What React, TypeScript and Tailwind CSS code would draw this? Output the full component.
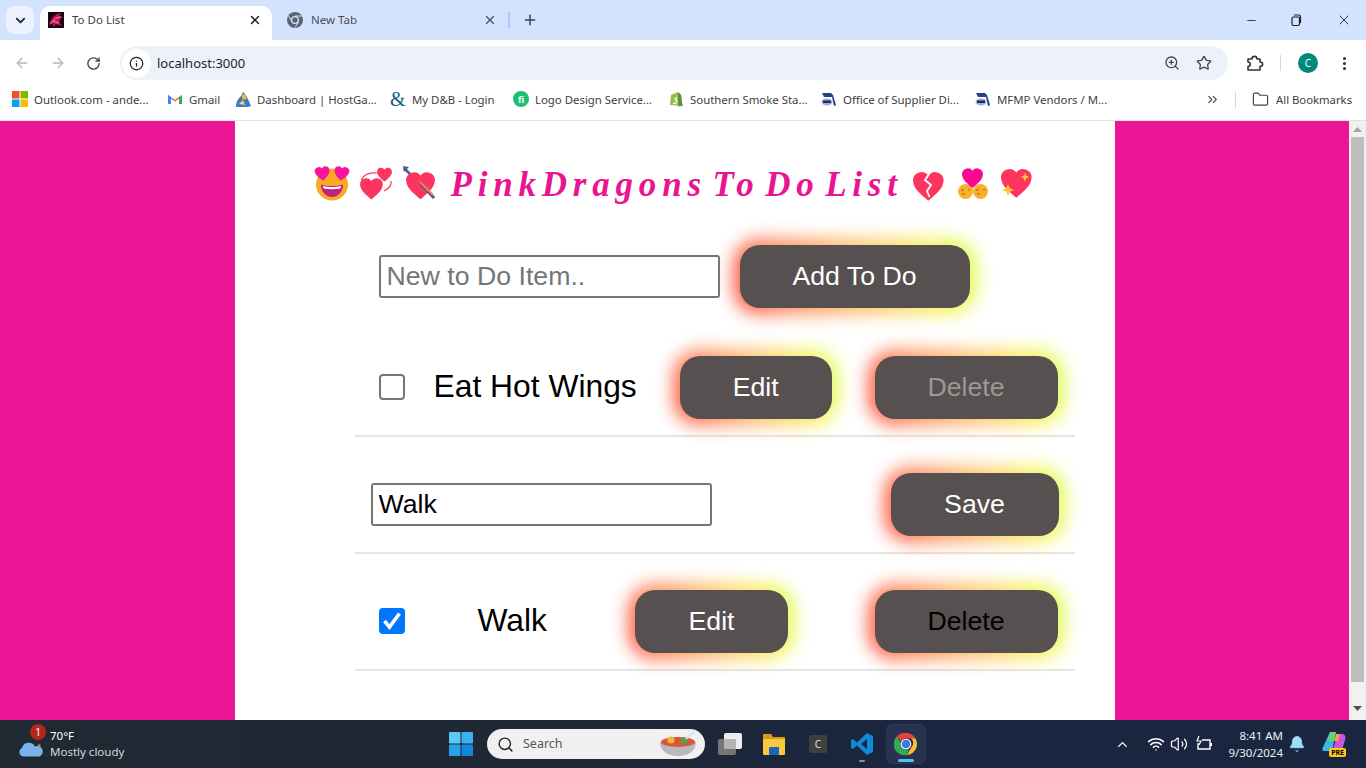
import React from "react";
import { ChevronDown, ArrowLeft, ArrowRight, RotateCw, Info, ZoomIn, Star, EllipsisVertical, ChevronsRight, Folder, Minus, X, Plus, Search, ChevronUp, Wifi, Volume2, Bell } from "lucide-react";

const HEART = "M12 22C8 18.5 1.5 14 1.5 8A5.8 5.8 0 0 1 12 4.8 5.8 5.8 0 0 1 22.500 8C22.500 14 16 18.500 12 22Z";

function ChromeLogo({ size }: { size: number }) {
  return (
    <svg width={size} height={size} viewBox="0 0 48 48">
      <path d="M24 2a22 22 0 0 1 19 11H24a11 11 0 0 0-10 6L6 8.500A22 22 0 0 1 24 2z" fill="#ea4335" />
      <path d="M43 13a22 22 0 0 1-17 33l9-16a11 11 0 0 0-1-17z" fill="#fbc02d" />
      <path d="M26 46A22 22 0 0 1 6 8.500L15 24a10 10 0 0 0 15 9.500z" fill="#34a853" />
      <circle cx="24" cy="24" r="10.500" fill="#fff" />
      <circle cx="24" cy="24" r="8.500" fill="#3b78e7" />
    </svg>
  );
}

function Tabs() {
  return (
    <div className="flex h-10 items-end bg-[#d3e3fd] shrink-0">
      <div className="ml-[6px] mb-[6px] flex h-[28px] w-[28px] items-center justify-center rounded-lg bg-[#ebf1fd]">
        <ChevronDown size={15} strokeWidth={3} className="text-[#1f2937]" />
      </div>
      <div className="ml-[6px] flex h-[34px] w-[232px] items-center rounded-t-[10px] bg-white pb-[6px] pl-2 pr-[10px]">
        <svg width="16" height="16" viewBox="0 0 16 16" className="shrink-0">
          <rect width="16" height="16" fill="#1a0710" />
          <path d="M1 13C3 6 7 2 13 1L11 4 15 5C12 6 12 9 11 10L14 14 8 12 5 15 5 11Z" fill="#c2185b" />
          <path d="M3 12C6 7 9 5 13 5M5 9L11 11" stroke="#ff7ab0" strokeWidth="1" fill="none" />
        </svg>
        <span className="ml-2 text-[11.500px] text-[#3c4043]">To Do List</span>
        <X size={14} strokeWidth={2.500} className="ml-auto text-[#1f1f1f]" />
      </div>
      <div className="ml-[15px] flex h-[34px] w-[210px] items-center pb-[6px]">
        <svg width="16" height="16" viewBox="0 0 16 16" className="shrink-0">
          <circle cx="8" cy="8" r="8" fill="#5b6470" />
          <path d="M8 4h7M5 10L1.500 3.500M11.500 10L8 15.500" stroke="#d3e3fd" strokeWidth="1" />
          <circle cx="8" cy="8" r="4" fill="#d3e3fd" />
          <circle cx="8" cy="8" r="2.700" fill="#5b6470" />
        </svg>
        <span className="ml-[8px] text-[11.500px] text-[#4a5058]">New Tab</span>
        <X size={14} strokeWidth={2.200} className="ml-auto text-[#4a5058]" />
      </div>
      <div className="ml-[11px] mb-[12px] h-[16px] w-[2px] bg-[#a8c7fa]" />
      <Plus size={16} strokeWidth={2.200} className="ml-[12px] mb-[12px] text-[#3c4043]" />
      <div className="ml-auto mb-[12px] flex items-center text-[#1f1f1f]">
        <Minus size={13} strokeWidth={1.500} />
        <svg width="14" height="14" viewBox="0 0 14 14" className="ml-[31px]" fill="none" stroke="#1f1f1f" strokeWidth="1.200">
          <rect x="3" y="4" width="7.500" height="8.500" rx="1.500" />
          <path d="M5 2h4.500a2 2 0 0 1 2 2v6" />
        </svg>
        <X size={16} strokeWidth={1.300} className="ml-[33px] mr-[14px]" />
      </div>
    </div>
  );
}

function Toolbar() {
  return (
    <div className="flex h-10 items-center bg-white pt-[6px] shrink-0">
      <ArrowLeft size={16} strokeWidth={2} className="ml-[14px] text-[#b4b7bb]" />
      <ArrowRight size={16} strokeWidth={2} className="ml-[20px] text-[#b4b7bb]" />
      <RotateCw size={15} strokeWidth={2.200} className="ml-[20px] text-[#474747]" />
      <div className="ml-[19px] flex h-[34px] w-[1108px] items-center rounded-full bg-[#edf2fa]">
        <div className="ml-[2px] flex h-[29px] w-[29px] items-center justify-center rounded-full bg-white">
          <Info size={15} strokeWidth={2} className="text-[#1f1f1f]" />
        </div>
        <span className="ml-[6px] mt-[1px] text-[13px] text-[#1f1f1f]">localhost:3000</span>
        <ZoomIn size={16} strokeWidth={2} className="ml-auto text-[#474747]" />
        <Star size={16} strokeWidth={2} className="ml-[16px] mr-[16px] text-[#474747]" />
      </div>
      <svg width="18" height="18" viewBox="0 0 18 18" className="ml-[18px]" fill="none" stroke="#333" strokeWidth="1.600" strokeLinejoin="round">
        <path d="M2 5H6C6 1.500 11 1.500 11 5H14V8C17.500 8 17.500 12.500 14 12.500V16H2V12.500C5 12.500 5 8 2 8Z" />
      </svg>
      <div className="ml-[16px] h-[16px] w-px bg-[#c7d7f5]" />
      <div className="ml-[17px] flex h-[20px] w-[20px] items-center justify-center rounded-full bg-[#00897b] text-[10px] text-white">C</div>
      <EllipsisVertical size={17} strokeWidth={2.400} className="ml-[18px] text-[#333]" />
    </div>
  );
}

const DmsIcon = () => (
  <svg width="17" height="16" viewBox="0 0 17 16">
    <path d="M1 2H10L12 4 15 14 13 15 11 6H3Z" fill="#28407e" />
    <ellipse cx="6" cy="11" rx="5.500" ry="3.500" fill="#9db2d8" />
    <rect x="2" y="9.500" width="8" height="2.500" fill="#1d2f66" />
  </svg>
);

const bookmarks: { w: number; label: string; icon: React.ReactNode }[] = [
  {
    w: 155,
    label: "Outlook.com - ande...",
    icon: (
      <svg width="16" height="16" viewBox="0 0 16 16">
        <rect width="7.500" height="7.500" fill="#f25022" />
        <rect x="8.500" width="7.500" height="7.500" fill="#7fba00" />
        <rect y="8.500" width="7.500" height="7.500" fill="#00a4ef" />
        <rect x="8.500" y="8.500" width="7.500" height="7.500" fill="#ffb900" />
      </svg>
    ),
  },
  {
    w: 68,
    label: "Gmail",
    icon: (
      <svg width="16" height="16" viewBox="0 0 16 16">
        <path d="M1 13V4l7 5 7-5v9h-3V7.500L8 10.500 4 7.500V13z" fill="#ea4335" />
        <path d="M1 4v9h3V6z" fill="#4285f4" />
        <path d="M15 4v9h-3V6z" fill="#34a853" />
        <path d="M12 6l3-2.500V5z" fill="#fbbc04" />
      </svg>
    ),
  },
  {
    w: 155,
    label: "Dashboard | HostGa...",
    icon: (
      <svg width="17" height="17" viewBox="0 0 17 17">
        <path d="M1 16C1 10 4 7 6 5L8 1 10 3 13 8 16 15 13 16Z" fill="#3f78c4" />
        <path d="M6 4L10 3 12 8 8 9Z" fill="#f5b52e" />
        <path d="M4 13L8 9 10 14Z" fill="#f0d27a" />
      </svg>
    ),
  },
  {
    w: 123,
    label: "My D&B - Login",
    icon: <span className="block w-4 font-['Liberation_Serif',serif] text-[20px] leading-4 text-[#14617f]">&amp;</span>,
  },
  {
    w: 155,
    label: "Logo Design Service...",
    icon: (
      <span className="flex h-4 w-4 items-center justify-center rounded-full bg-[#1dbf73] text-[9px] font-bold leading-none text-white">fi</span>
    ),
  },
  {
    w: 153,
    label: "Southern Smoke Sta...",
    icon: (
      <svg width="16" height="16" viewBox="0 0 16 16">
        <path d="M3 4L10 1 13 4 14.500 15 2 14Z" fill="#95bf47" />
        <path d="M10 1l3 3 1.500 11-4 .5z" fill="#5e8e3e" />
        <path d="M9 6C6 6 6 9 8 10S7 12 5.500 11.500L5 13C9 14 11 10 8.500 8.500 7.500 8 8 7 9.500 7.500Z" fill="#fff" />
      </svg>
    ),
  },
  { w: 154, label: "Office of Supplier Di...", icon: <DmsIcon /> },
  { w: 227, label: "MFMP Vendors / M...", icon: <DmsIcon /> },
];

function Bookmarks() {
  return (
    <div className="flex h-[41px] items-center border-b border-[#e1e1e1] bg-white pb-[1px] shrink-0">
      <div className="flex pl-[12px]">
        {bookmarks.map((b) => (
          <div key={b.label} className="flex items-center" style={{ width: b.w }}>
            <span className="flex w-[22px] shrink-0">{b.icon}</span>
            <span className="mt-[1px] whitespace-nowrap text-[11.400px] text-[#3c4043]">{b.label}</span>
          </div>
        ))}
      </div>
      <ChevronsRight size={15} strokeWidth={1.800} className="ml-[3px] text-[#474747]" />
      <div className="ml-[15px] h-[16px] w-px bg-[#c7d7f5]" />
      <Folder size={17} strokeWidth={1.700} className="ml-[16px] text-[#474747]" />
      <span className="ml-[7px] mt-[1px] whitespace-nowrap text-[11.300px] text-[#3c4043]">All Bookmarks</span>
    </div>
  );
}

function GlowButton({ w, label, color = "text-white", className = "" }: { w: number; label: string; color?: string; className?: string }) {
  return (
    <div className={`relative h-[63px] shrink-0 ${className}`} style={{ width: w }}>
      <span className="absolute -inset-[6px] rounded-[26px] bg-[linear-gradient(78deg,#ff1800_0%,#ff6a3a_18%,#ffb050_50%,#f8f040_82%,#c8ff20_100%)] opacity-85 blur-[9px]" />
      <button className={`relative h-full w-full rounded-[20px] bg-[#575050] text-[26.700px] ${color}`}>{label}</button>
    </div>
  );
}

function Heart({ x, y, s, fill = "#fd3460", rotate = 0 }: { x: number; y: number; s: number; fill?: string; rotate?: number }) {
  return <path d={HEART} fill={fill} transform={`translate(${x} ${y}) scale(${s / 24}) rotate(${rotate} 12 12)`} />;
}

const Emoji = ({ children, w }: { children: React.ReactNode; w: number }) => (
  <svg width={w} height="36" viewBox={`0 0 ${w} 36`} className="shrink-0 overflow-visible">
    {children}
  </svg>
);

const Sparkle = ({ cx, cy, r }: { cx: number; cy: number; r: number }) => (
  <path
    d={`M${cx} ${cy - r}L${cx + r * 0.3} ${cy - r * 0.3}L${cx + r} ${cy}L${cx + r * 0.3} ${cy + r * 0.3}L${cx} ${cy + r}L${cx - r * 0.3} ${cy + r * 0.3}L${cx - r} ${cy}L${cx - r * 0.3} ${cy - r * 0.3}Z`}
    fill="#fcc92e"
  />
);

function Title() {
  return (
    <div className="flex h-[36px] items-center pl-[80px]">
      <Emoji w={35}>
        <circle cx="17" cy="18.500" r="16" fill="#fba826" />
        <path d="M6 18.500C12 20.500 22 20.500 28 18.500 28 26 23 31 17 31S6 26 6 18.500Z" fill="#c0227e" />
        <path d="M8 20C13 21.300 21 21.300 26 20L25.500 22.500C20 23.500 14 23.500 8.500 22.500Z" fill="#fff" />
        <Heart x={-1} y={-1} s={17} fill="#f8139a" rotate={-8} />
        <Heart x={18} y={-1} s={17} fill="#f8139a" rotate={8} />
      </Emoji>
      <span className="w-[8px]" />
      <Emoji w={36}>
        <path d="M3 14C6 8 11 6 19 7M33 15C34 20 30 23 26 25" stroke="#fd3460" strokeWidth="1.200" fill="none" />
        <Heart x={0.4} y={9.700} s={26} />
        <Heart x={18} y={0} s={17} />
      </Emoji>
      <span className="w-[9px]" />
      <Emoji w={36}>
        <path d="M1 2L10 11" stroke="#5b5298" strokeWidth="2.500" />
        <path d="M0 0L6 1 1 6Z" fill="#5b5298" />
        <Heart x={1} y={3} s={33} />
        <path d="M17 17L31 32" stroke="#5b5298" strokeWidth="3" />
        <path d="M17 16L30 29" stroke="#f4893b" strokeWidth="2" />
      </Emoji>
      <span className="ml-[12px] whitespace-nowrap font-['Liberation_Serif',serif] text-[35px] font-bold italic leading-none tracking-[5.800px] text-[#e91590] [word-spacing:-9px]">
        PinkDragons To Do List
      </span>
      <span className="w-[9px]" />
      <Emoji w={34}>
        <Heart x={-1.200} y={2.600} s={35} />
        <path d="M18 6.500L13 14 19 19 15 25 17.500 31" stroke="#fff" strokeWidth="1.800" fill="none" />
      </Emoji>
      <span className="w-[11px]" />
      <Emoji w={33}>
        <circle cx="8.500" cy="25.500" r="7.500" fill="#fbb02b" />
        <circle cx="23.500" cy="25.500" r="7.500" fill="#fbb02b" />
        <path d="M4 24h3M19 24h3M5 28h3M20 28h3M11 24h2M26 24h2" stroke="#c57a10" strokeWidth="1.300" />
        <Heart x={3.500} y={0} s={24} fill="#f8098f" />
      </Emoji>
      <span className="w-[10px]" />
      <Emoji w={34}>
        <Heart x={-1.200} y={-0.400} s={35} />
        <Sparkle cx={25} cy={11} r={4.500} />
        <Sparkle cx={8} cy={24} r={6} />
      </Emoji>
    </div>
  );
}

function Checkbox({ checked = false }: { checked?: boolean }) {
  return (
    <span className="relative mb-[2px] block h-[26px] w-[26px] shrink-0">
      <input
        type="checkbox"
        defaultChecked={checked}
        className={`block h-[26px] w-[26px] appearance-none rounded-[4px] ${checked ? "bg-[#0075ff]" : "border-2 border-[#767676] bg-white"}`}
      />
      {checked && (
        <svg width="26" height="26" viewBox="0 0 26 26" className="pointer-events-none absolute left-0 top-0">
          <path d="M5.500 13L10.500 19 20.500 5.500" stroke="#fff" strokeWidth="3.600" fill="none" />
        </svg>
      )}
    </span>
  );
}

function TodoCard() {
  return (
    <div className="h-full w-[880px] overflow-hidden bg-white font-['Liberation_Sans',sans-serif]">
      <div className="pt-[45px]">
        <Title />
      </div>
      <div className="ml-[144px] mt-[43px] flex items-center">
        <input
          placeholder="New to Do Item.."
          className="box-border h-[43px] w-[341px] rounded-[3px] border-2 border-[#767676] bg-white px-[6px] text-[26.700px] outline-none placeholder:text-[#757575]"
        />
        <GlowButton w={230} label="Add To Do" className="ml-[20px]" />
      </div>
      <div className="ml-[120px] mt-[12px] w-[720px]">
        <div className="flex items-center border-b-2 border-[#e5e5e5] pb-[16px] pl-[24px] pr-[17px] pt-[36px]">
          <Checkbox />
          <span className="mb-[1px] ml-[29px] whitespace-nowrap text-[31.800px] leading-none text-black">Eat Hot Wings</span>
          <GlowButton w={152} label="Edit" className="ml-[43px]" />
          <GlowButton w={183} label="Delete" color="text-[#9b9898]" className="ml-auto" />
        </div>
        <div className="flex items-center border-b-2 border-[#e5e5e5] pb-[16px] pl-[16px] pr-[16px] pt-[36px]">
          <input
            defaultValue="Walk"
            className="box-border h-[43px] w-[341px] rounded-[3px] border-2 border-[#767676] bg-white px-[6px] text-[26.700px] text-black outline-none"
          />
          <GlowButton w={168} label="Save" className="ml-auto" />
        </div>
        <div className="flex items-center border-b-2 border-[#e5e5e5] pb-[16px] pl-[24px] pr-[17px] pt-[36px]">
          <Checkbox checked />
          <span className="mb-[1px] ml-[73px] whitespace-nowrap text-[31.800px] leading-none text-black">Walk</span>
          <GlowButton w={153} label="Edit" className="ml-[88px]" />
          <GlowButton w={183} label="Delete" color="text-black" className="ml-auto" />
        </div>
      </div>
    </div>
  );
}

function Scrollbar() {
  return (
    <div className="flex w-[17px] shrink-0 flex-col items-center bg-[#f1f1f1]">
      <svg width="9" height="5" viewBox="0 0 9 5" className="mt-[6px] shrink-0">
        <path d="M4.500 0L9 5H0Z" fill="#a3a3a3" />
      </svg>
      <div className="mt-[5px] h-[545px] w-[13px] shrink-0 bg-[#bebebe]" />
      <svg width="9" height="5" viewBox="0 0 9 5" className="mt-[24px] shrink-0">
        <path d="M4.500 5L9 0H0Z" fill="#505050" />
      </svg>
    </div>
  );
}

function Taskbar() {
  return (
    <div className="flex h-12 shrink-0 items-center bg-[linear-gradient(90deg,#1f2a33,#1f2835_40%,#1a2540_70%,#1a2540)] text-white">
      <div className="relative ml-[18px] flex h-[26px] w-[26px] shrink-0 items-end">
        <svg width="26" height="16" viewBox="0 0 26 16">
          <path d="M5 15.500A4.500 4.500 0 0 1 4 7 7 7 0 0 1 17 5.500 5 5 0 0 1 21.500 15.500Z" fill="#7ab2ec" />
          <path d="M20 3l3 1-2 3z" fill="#f08a24" />
        </svg>
        <span className="absolute -top-[7px] left-[12px] flex h-[16px] w-[16px] items-center justify-center rounded-full bg-[#b3261e] text-[10px] leading-none">1</span>
      </div>
      <div className="ml-[6px] flex w-[100px] shrink-0 flex-col text-[11.500px] leading-[16px]">
        <span>70°F</span>
        <span className="whitespace-nowrap text-[#d5d8dc]">Mostly cloudy</span>
      </div>
      <svg width="24" height="24" viewBox="0 0 24 24" className="ml-[299px] shrink-0">
        <rect width="11.500" height="11.500" rx="1" fill="#5cc8f5" />
        <rect x="12.500" width="11.500" height="11.500" rx="1" fill="#3eb0f0" />
        <rect y="12.500" width="11.500" height="11.500" rx="1" fill="#2aa2ea" />
        <rect x="12.500" y="12.500" width="11.500" height="11.500" rx="1" fill="#1288d8" />
      </svg>
      <div className="ml-[14px] flex h-[30px] w-[218px] shrink-0 items-center rounded-full bg-[#f0f0f0] text-[#555]">
        <Search size={17} strokeWidth={2} className="ml-[10px] text-[#222]" />
        <span className="ml-[9px] text-[12.500px]">Search</span>
        <svg width="38" height="26" viewBox="0 0 38 26" className="ml-auto mr-[8px]">
          <path d="M1 11H37C37 20 29 25 19 25S1 20 1 11Z" fill="#b9b9bd" />
          <ellipse cx="19" cy="11" rx="17" ry="5" fill="#d9553b" />
          <circle cx="12" cy="9" r="3.500" fill="#f4b63a" />
          <circle cx="25" cy="10" r="3.500" fill="#5b9e42" />
          <path d="M27 8L35 1" stroke="#cfe3f5" strokeWidth="2" />
        </svg>
      </div>
      <svg width="24" height="24" viewBox="0 0 24 24" className="ml-[13px] shrink-0">
        <rect x="6" y="1" width="18" height="16" rx="2" fill="#ededed" />
        <rect x="0" y="7" width="18" height="16" rx="2" fill="#767676" />
        <rect x="6" y="7" width="12" height="10" fill="#b5b5b5" />
      </svg>
      <svg width="24" height="24" viewBox="0 0 24 24" className="ml-[20px] shrink-0">
        <path d="M1 3a1 1 0 0 1 1-1h7l2 3h11a1 1 0 0 1 1 1v3H1z" fill="#d99a16" />
        <path d="M1 7h22v15a1 1 0 0 1-1 1H2a1 1 0 0 1-1-1z" fill="#fbc73c" />
        <rect x="7" y="15" width="10" height="8" rx="1" fill="#1668b8" />
      </svg>
      <div className="ml-[23px] flex h-[18px] w-[18px] shrink-0 items-center justify-center rounded-[2px] bg-[#3f3f3f] text-[10px] text-[#cfe0e8]">C</div>
      <div className="relative ml-[23px] h-[24px] w-[24px] shrink-0">
        <svg width="24" height="24" viewBox="0 0 24 24">
          <path d="M17 1L23 4V20L17 23 7 13.500 3 17 1 16V8L3 7 7 10.500ZM17 7L11 12 17 17Z" fill="#0f8ad8" fillRule="evenodd" />
        </svg>
        <span className="absolute left-[9px] top-[28px] h-[2px] w-[6px] rounded-full bg-[#8b8f96]" />
      </div>
      <div className="relative ml-[12px] flex h-[40px] w-[40px] shrink-0 items-center justify-center rounded-md border border-[#2e3a55] bg-[#263250]">
        <ChromeLogo size={24} />
        <span className="absolute bottom-[1px] left-[11px] h-[3px] w-[16px] rounded-full bg-[#4fc3f7]" />
      </div>
      <ChevronUp size={15} strokeWidth={2.200} className="ml-[189px] shrink-0 text-white" />
      <Wifi size={18} strokeWidth={2} className="ml-[17px] shrink-0" />
      <Volume2 size={18} strokeWidth={1.600} className="ml-[5px] shrink-0" />
      <svg width="18" height="18" viewBox="0 0 18 18" className="ml-[7px] shrink-0" fill="none" stroke="#fff" strokeWidth="1.400">
        <path d="M7 5H15V14H3V8" />
        <path d="M16 8v3" strokeWidth="2" />
        <path d="M4 1L2 6H6L4 10" strokeWidth="1.200" />
      </svg>
      <div className="ml-[14px] flex w-[56px] shrink-0 flex-col items-end whitespace-nowrap text-[11.500px] leading-[17px] text-[#eef0f3]">
        <span>8:41 AM</span>
        <span>9/30/2024</span>
      </div>
      <Bell size={18} fill="#9fdcfb" strokeWidth={1} className="ml-[5px] shrink-0 text-[#9fdcfb]" />
      <div className="relative ml-[16px] h-[26px] w-[24px] shrink-0">
        <svg width="24" height="22" viewBox="0 0 24 22">
          <path d="M8 1H14L10 20H2C0 20 0 18 1 16Z" fill="#3fb6e8" />
          <path d="M8 1H14L12 10 5 10Z" fill="#5fd27a" />
          <path d="M14 3H20C23 3 24 6 23 9L20 19C19 21 17 21 15 21H10L14 8Z" fill="#c45ad8" />
          <path d="M14 3H18L16 10 12 10Z" fill="#f2a33a" />
        </svg>
        <span className="absolute bottom-0 right-0 rounded-[2px] bg-[#ffc61a] px-[2px] text-[7px] font-bold leading-[9px] text-black">PRE</span>
      </div>
    </div>
  );
}

export default function App() {
  return (
    <div className="flex h-screen w-full flex-col overflow-hidden font-['Noto_Sans',sans-serif]">
      <Tabs />
      <Toolbar />
      <Bookmarks />
      <div className="flex min-h-0 flex-1">
        <div className="flex min-w-0 flex-1 justify-center bg-[#eb1596]">
          <TodoCard />
        </div>
        <Scrollbar />
      </div>
      <Taskbar />
    </div>
  );
}
